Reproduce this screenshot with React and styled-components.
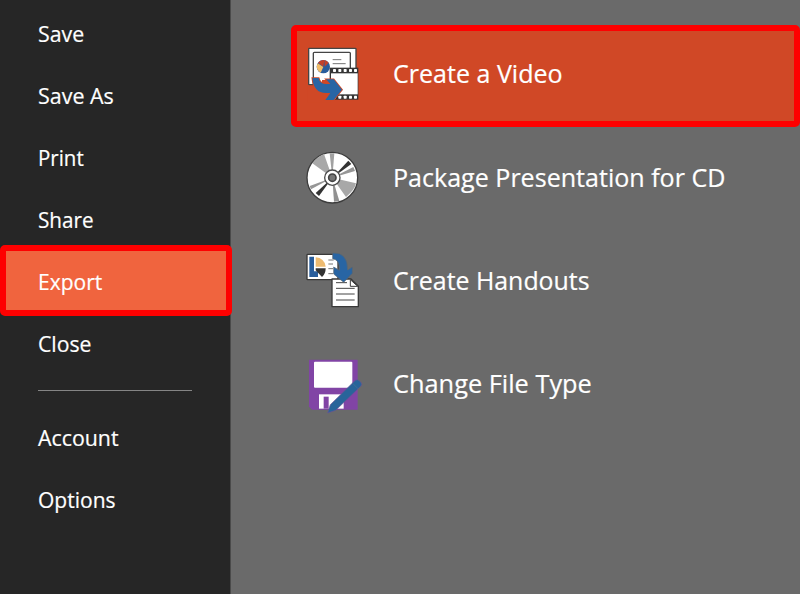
import React from "react";
import styled, { createGlobalStyle } from "styled-components";

const GlobalStyle = createGlobalStyle`
  * { box-sizing: border-box; }
  body { margin: 0; overflow: hidden; background: #6a6a6a; }
`;

const Screen = styled.div`
  display: flex;
  width: 800px;
  height: 594px;
  background: #6a6a6a;
  color: #fff;
  font-family: "Open Sans", "Noto Sans", sans-serif;
`;

const Sidebar = styled.nav`
  display: flex;
  flex-direction: column;
  flex: 0 0 231px;
  padding-top: 3px;
  background: #262626;
  border-right: 1px solid #4a4a4a;
`;

const MenuItem = styled.div`
  display: flex;
  align-items: center;
  height: 62px;
  padding-left: 38px;
  font-size: 22px;
  line-height: 30px;
  white-space: nowrap;
`;

const ActiveMenuItem = styled(MenuItem)`
  position: relative;
  height: 71px;
  margin: -6px -2px -3px 0;
  padding: 3px 0 0 32px;
  background: #f0643e;
  border: 6px solid #fe0000;
  border-radius: 5px;
`;

const Divider = styled.hr`
  width: 154px;
  height: 1px;
  margin: 15px 0 16px 38px;
  border: 0;
  background: #858585;
`;

const ExportPanel = styled.main`
  display: flex;
  flex-direction: column;
  flex: 1;
  padding: 25px 0 0 60px;
`;

const ExportOption = styled.div`
  display: flex;
  align-items: center;
  height: 103.5px;
  padding-left: 9px;
  font-size: 26px;
  line-height: 36px;
  white-space: nowrap;
`;

const ActiveExportOption = styled(ExportOption)`
  height: 102px;
  padding-left: 3px;
  background: #d04826;
  border: 6px solid #fe0000;
  border-radius: 5px;
`;

const OptionIcon = styled.svg`
  flex: 0 0 70px;
  width: 70px;
  height: 70px;
  margin-right: 23px;
`;

const Label = styled.span`
  display: block;
  transform-origin: 0 50%;
  transform: translateY(${(p) => p.$shift ?? -1}px) scaleX(${(p) => p.$stretch || 1});
  -webkit-text-stroke: 0.2px #fff;
`;

const FILM_HOLES = [99, 115, 131, 147, 162];

function VideoIcon() {
  return (
    <OptionIcon viewBox="0 3 210 210">
      <rect x="26" y="25" width="142" height="109" rx="2" fill="#fff" stroke="#454545" strokeWidth="4" />
      <path d="M40 134V40q0-3 3-3h105q3 0 3 3v50" fill="none" stroke="#454545" strokeWidth="4" />
      <path d="M42 110H92V187H22V137H42Z" fill="#d04826" />
      <path d="M42 108H90V120H66V134L56 127V115H42Z" fill="#fff" />
      <circle cx="70" cy="80" r="20" fill="#285d9c" />
      <path d="M70 80L54 68A20 20 0 0 1 73 60Z" fill="#c3412a" />
      <path d="M73 60A20 20 0 0 1 86 68L74 80Z" fill="#c3412a" />
      <path d="M70 81L53 70A20 20 0 0 0 62 98Z" fill="#f4bd68" />
      <path d="M98 59h26M98 71h39" stroke="#747474" strokeWidth="3" />
      <rect x="89" y="83" width="86" height="96" fill="#353535" />
      <rect x="93" y="100" width="80" height="63" fill="#fff" />
      {FILM_HOLES.map((x) => (
        <g key={x} fill="#fff">
          <rect x={x} y="87" width="9" height="9" rx="2" />
          <rect x={x} y="167" width="9" height="9" rx="2" />
        </g>
      ))}
      <path d="M37 114H56Q59 132 79 132H91L78 118H101L126 149L101 180H76L91 159H78Q41 159 37 114Z" fill="#2865a4" stroke="#d04826" strokeWidth="5" paintOrder="stroke" />
    </OptionIcon>
  );
}

function DiscIcon() {
  return (
    <OptionIcon viewBox="0 -4 210 210">
      <circle cx="97" cy="97" r="76" fill="#fff" stroke="#3d3d3d" strokeWidth="4" />
      <path d="M97 97L37 54Q50 35 72 26Z" fill="#a8a8a8" />
      <path d="M97 97L89 24L103 24Z" fill="#a1a1a1" />
      <path d="M97 97L145 46L154 56Z" fill="#333" />
      <path d="M97 97L160 65L165 77Z" fill="#969696" />
      <path d="M97 97L168 114Q164 134 138 155Z" fill="#a8a8a8" />
      <path d="M97 97L102 169L118 167Z" fill="#919191" />
      <path d="M97 97L57 152L47 143Z" fill="#333" />
      <path d="M97 97L33 132L29 122Z" fill="#969696" />
      <circle cx="97" cy="97" r="23" fill="#fff" stroke="#4b4b4b" strokeWidth="4" />
      <circle cx="97" cy="97" r="11" fill="#777" stroke="#444" strokeWidth="5" />
    </OptionIcon>
  );
}

function HandoutsIcon() {
  return (
    <OptionIcon viewBox="0 7 210 210">
      <rect x="21" y="29" width="93" height="76" rx="2" fill="#fff" stroke="#393939" strokeWidth="4" />
      <path d="M28 36H42V80H54V97H28Z" fill="#285d9c" />
      <path d="M47 38Q73 40 77 66H47Z" fill="#edbb71" />
      <path d="M47 71H77Q77 88 66 97L47 77Z" fill="#333" />
      <path d="M85 46h16M85 58h14M85 72h14M85 87h14" stroke="#737373" strokeWidth="3" />
      <path d="M96 103H153L175 125V186H96Z" fill="#fff" stroke="#393939" strokeWidth="4" strokeLinejoin="round" />
      <path d="M151 105V125H173Z" fill="#fff" stroke="#393939" strokeWidth="3" />
      <path d="M108 114h33M108 131h56M108 148h56M108 166h56" stroke="#444" strokeWidth="3" />
      <path d="M98 25Q143 22 143 76L157 67V86L131 113L101 88V67L118 77Q121 46 98 42Z" fill="#2865a4" stroke="#5c6770" strokeWidth="2" />
    </OptionIcon>
  );
}

function FileTypeIcon() {
  return (
    <OptionIcon viewBox="0 2 210 210">
      <path d="M27 28H173V178H36L27 169Z" fill="#8144a5" />
      <rect x="42" y="34" width="115" height="78" rx="3" fill="#fff" />
      <rect x="57" y="132" width="74" height="43" fill="#fff" />
      <rect x="71" y="139" width="15" height="36" fill="#8144a5" />
      <path d="M83 188L91 163L166 90Q172 86 178 91L184 98Q187 103 182 108L107 180Z" fill="#28649a" stroke="#6a5295" strokeWidth="2" />
      <path d="M158 99L175 116" stroke="#4a7194" strokeWidth="2" />
    </OptionIcon>
  );
}

export default function App() {
  return (
    <>
      <GlobalStyle />
      <Screen>
        <Sidebar>
          <MenuItem><Label $stretch={0.97}>Save</Label></MenuItem>
          <MenuItem><Label $stretch={0.975}>Save As</Label></MenuItem>
          <MenuItem><Label $stretch={0.93}>Print</Label></MenuItem>
          <MenuItem><Label $stretch={0.94}>Share</Label></MenuItem>
          <ActiveMenuItem><Label $stretch={0.955}>Export</Label></ActiveMenuItem>
          <MenuItem><Label $stretch={0.965}>Close</Label></MenuItem>
          <Divider />
          <MenuItem><Label $stretch={0.97}>Account</Label></MenuItem>
          <MenuItem><Label $stretch={0.955}>Options</Label></MenuItem>
        </Sidebar>
        <ExportPanel>
          <ActiveExportOption><VideoIcon /><Label $shift={-3} $stretch={0.963}>Create a Video</Label></ActiveExportOption>
          <ExportOption><DiscIcon /><Label $shift={-2.5} $stretch={0.964}>Package Presentation for CD</Label></ExportOption>
          <ExportOption><HandoutsIcon /><Label $shift={-2.5} $stretch={0.957}>Create Handouts</Label></ExportOption>
          <ExportOption><FileTypeIcon /><Label $shift={-3} $stretch={0.975}>Change File Type</Label></ExportOption>
        </ExportPanel>
      </Screen>
    </>
  );
}
